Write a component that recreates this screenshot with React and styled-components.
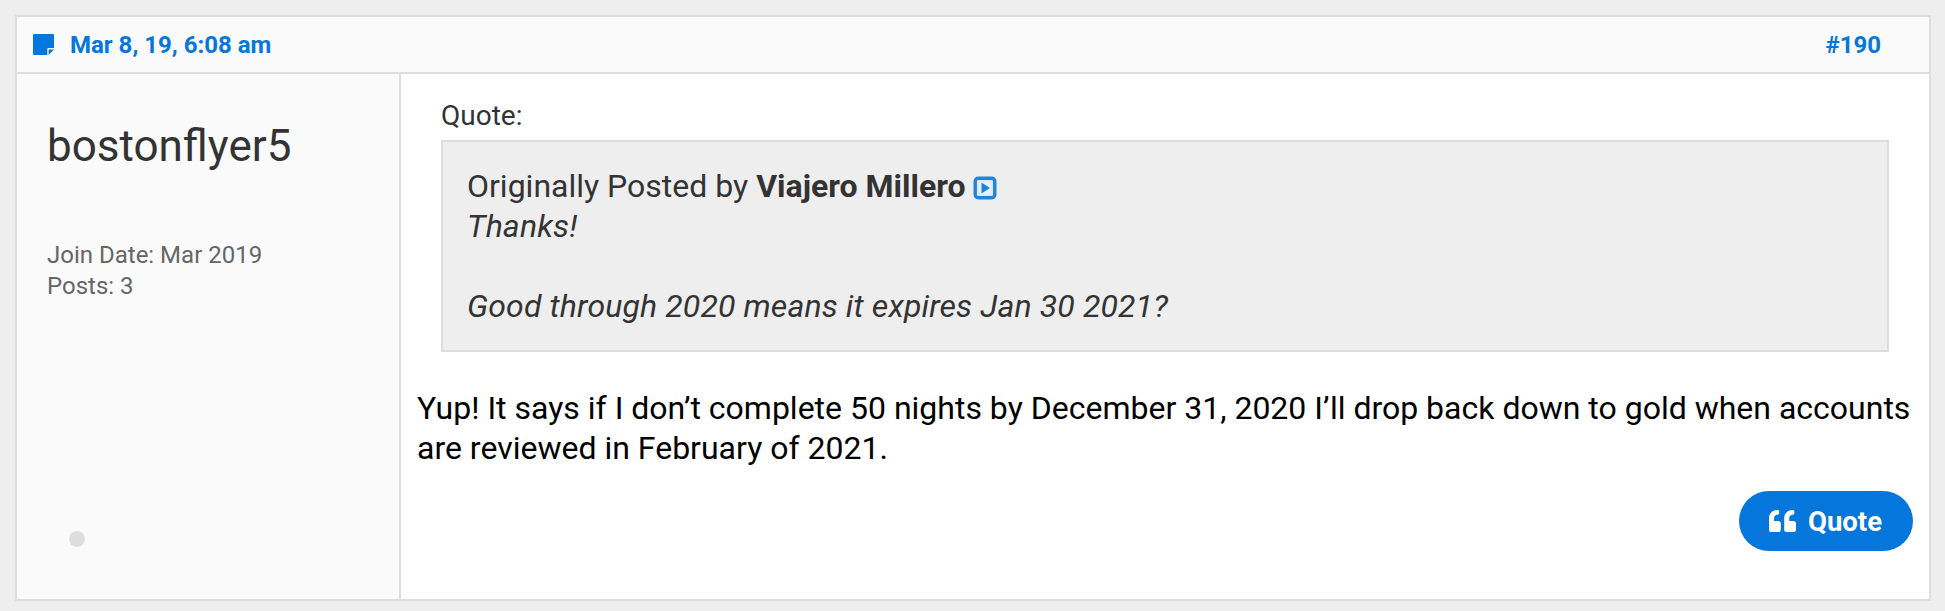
import React from "react";
import styled, { createGlobalStyle } from "styled-components";

const GlobalStyle = createGlobalStyle`
    * {
        box-sizing: border-box;
    }
    body {
        margin: 0;
        background: #eee;
        font-family: Roboto, sans-serif;
    }
`;

const Page = styled.div`
    height: 611px;
    padding: 15px 14px 10px 15px;
`;

const Post = styled.article`
    height: 586px;
    display: flex;
    flex-direction: column;
    background: #fff;
    border: 2px solid #ddd;
`;

const PostHeader = styled.header`
    height: 57px;
    padding: 0 48px 0 16px;
    display: flex;
    align-items: center;
    background: #fafafa;
    border-bottom: 2px solid #ddd;
    color: #0576dc;
    font-size: 24px;
    font-weight: 700;
`;

const NoteIcon = styled.svg`
    width: 21px;
    height: 21px;
    margin-right: 16px;
`;

const PostNumber = styled.span`
    margin-left: auto;
`;

const PostBody = styled.div`
    flex: 1;
    display: flex;
`;

const UserPanel = styled.aside`
    width: 384px;
    padding: 45px 30px;
    background: #fafafa;
    border-right: 2px solid #ddd;
`;

const UserName = styled.div`
    color: #333;
    font-size: 44px;
    line-height: 54px;
`;

const UserStats = styled.div`
    margin-top: 67px;
    color: #666;
    font-size: 24px;
    line-height: 31px;
`;

const StatusDot = styled.div`
    width: 16px;
    height: 16px;
    margin: 229px 0 0 22px;
    border-radius: 50%;
    background: #ddd;
`;

const Content = styled.div`
    flex: 1;
    padding: 26px 16px 0;
    display: flex;
    flex-direction: column;
    font-size: 32px;
    line-height: 40px;
`;

const QuoteBlock = styled.div`
    margin: 0 24px;
    color: #333;
`;

const QuoteLabel = styled.div`
    font-size: 28px;
    line-height: 32px;
`;

const QuoteBox = styled.blockquote`
    height: 212px;
    margin: 8px 0 0;
    padding: 24px;
    background: #eee;
    border: 2px solid #ddd;
`;

const QuoteText = styled.div`
    font-style: italic;
    letter-spacing: .13px;
`;

const ViewIcon = styled.svg`
    width: 24px;
    height: 24px;
    margin-left: 7px;
    vertical-align: -3px;
`;

const Message = styled.div`
    margin-top: 36px;
    color: #000;
`;

const QuoteButton = styled.button`
    align-self: flex-end;
    width: 174px;
    height: 60px;
    margin: 23px 0 0;
    padding: 0 1px 0 0;
    display: flex;
    align-items: center;
    justify-content: center;
    gap: 12px;
    background: #0576dc;
    border: 0;
    border-radius: 30px;
    color: #fff;
    font-family: inherit;
    font-size: 27.5px;
    font-weight: 700;
`;

const App = () => {
    return (
        <Page>
            <GlobalStyle/>
            <Post>
                <PostHeader>
                    <NoteIcon viewBox="0 0 21 21">
                        <path fill="#0576dc" d="M1.2 0h18.6A1.2 1.2 0 0 1 21 1.2V14h-5.5a1.2 1.2 0 0 0-1.2 1.2V21H1.2A1.2 1.2 0 0 1 0 19.8V1.2A1.2 1.2 0 0 1 1.2 0z"/>
                        <path fill="#0576dc" d="M15.6 15.4H21L15.6 21z"/>
                    </NoteIcon>
                    <span>Mar 8, 19, 6:08 am</span>
                    <PostNumber>#190</PostNumber>
                </PostHeader>
                <PostBody>
                    <UserPanel>
                        <UserName>bostonflyer5</UserName>
                        <UserStats>
                            <div>Join Date: Mar 2019</div>
                            <div>Posts: 3</div>
                        </UserStats>
                        <StatusDot/>
                    </UserPanel>
                    <Content>
                        <QuoteBlock>
                            <QuoteLabel>Quote:</QuoteLabel>
                            <QuoteBox>
                                <div>
                                    Originally Posted by <b>Viajero Millero</b>
                                    <ViewIcon viewBox="0 0 24 24">
                                        <rect x="2.2" y="2.2" width="19.6" height="19.6" rx="3" fill="#d5e6f5" stroke="#1c85de" strokeWidth="3.4"/>
                                        <rect x="5.5" y="5.5" width="13" height="13" rx="1" fill="#e9eff4"/>
                                        <path d="M8.5 6.5l8.5 5.5-8.5 5.5z" fill="#1c85de"/>
                                    </ViewIcon>
                                </div>
                                <QuoteText>
                                    Thanks!<br/><br/>
                                    Good through 2020 means it expires Jan 30 2021?
                                </QuoteText>
                            </QuoteBox>
                        </QuoteBlock>
                        <Message>
                            Yup! It says if I don’t complete 50 nights by December 31, 2020 I’ll drop back down to gold when accounts are reviewed in February of 2021.
                        </Message>
                        <QuoteButton>
                            <svg width="27" height="22" viewBox="0 0 512 448" preserveAspectRatio="none">
                                <path fill="#fff" d="M464 224h-80v-64c0-35 29-64 64-64h8c13 0 24-11 24-24V24c0-13-11-24-24-24h-8c-88 0-160 72-160 160v240c0 26 22 48 48 48h128c26 0 48-22 48-48V272c0-26-22-48-48-48zm-288 0H96v-64c0-35 29-64 64-64h8c13 0 24-11 24-24V24c0-13-11-24-24-24h-8C72 0 0 72 0 160v240c0 26 22 48 48 48h128c26 0 48-22 48-48V272c0-26-22-48-48-48z"/>
                            </svg>
                            Quote
                        </QuoteButton>
                    </Content>
                </PostBody>
            </Post>
        </Page>
    );
};

export default App;
